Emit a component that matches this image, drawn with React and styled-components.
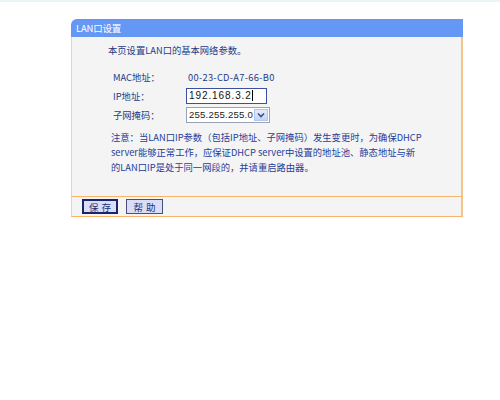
import React from "react";
import styled, { createGlobalStyle } from "styled-components";

const Global = createGlobalStyle`
  html, body { margin: 0; padding: 0; background: #ffffff; }
  body {
    font-family: "Noto Sans CJK SC", "Noto Sans", sans-serif;
    border-top: 2px solid #e6f6f6;
  }
`;

const Page = styled.div`
  padding: 17px 0 0 71px;
`;

const Panel = styled.div`
  width: 392px;
`;

const Header = styled.div`
  height: 18px;
  display: flex;
  align-items: center;
  padding-left: 5px;
  background: #6597f4;
  border-top-left-radius: 6px;
  color: #ffffff;
  font-size: 9.5px;
  letter-spacing: -0.2px;
`;

const Body = styled.div`
  background: #f4f4f4;
  border-left: 1px solid #f2d2a6;
  border-right: 2px solid #f5c489;
  padding: 6px 0 21px 36px;
  color: #243c84;
  font-size: 9.3px;
`;

const Intro = styled.div`
  line-height: 15px;
`;

const Fields = styled.div`
  margin-top: 9px;
  padding-left: 5px;
  display: grid;
  grid-template-columns: 73px auto;
  grid-auto-rows: 19px;
  align-items: center;
`;

const Label = styled.div``;

const Value = styled.div`
  padding-left: 2px;
  letter-spacing: 0.3px;
`;

const TextInput = styled.div`
  width: 77px;
  height: 14px;
  border: 1px solid #3c4fa0;
  background: #ffffff;
  display: flex;
  align-items: center;
  padding-left: 2px;
  font-family: "Liberation Sans", Arial, sans-serif;
  font-size: 10px;
  letter-spacing: 0.9px;
  color: #111;
`;

const Caret = styled.span`
  display: inline-block;
  width: 1px;
  height: 11px;
  background: #000;
`;

const SelectBox = styled.div`
  width: 82px;
  height: 14px;
  border: 1px solid #9aa3b5;
  background: #ffffff;
  display: flex;
  align-items: stretch;
  font-family: "Liberation Sans", Arial, sans-serif;
  font-size: 9.6px;
  letter-spacing: 0.2px;
  color: #222;
`;

const SelectText = styled.div`
  flex: 1;
  display: flex;
  align-items: center;
  padding-left: 2px;
`;

const ArrowButton = styled.div`
  width: 13px;
  background: linear-gradient(#e4ecfb, #c4d4f2);
  border: 1px solid #b6c6e6;
  margin: 1px;
  display: flex;
  align-items: center;
  justify-content: center;
`;

const Note = styled.div`
  margin-top: 6px;
  padding-left: 3px;
  line-height: 15px;
  white-space: nowrap;
  color: #1f3d9a;
`;

const Footer = styled.div`
  height: 19px;
  border-top: 1px solid #f7b46a;
  border-bottom: 1px solid #f7b46a;
  border-left: 1px solid #f2d2a6;
  border-right: 2px solid #f5c489;
  background: #f4f4f4;
  display: flex;
  align-items: center;
  gap: 8px;
  padding-left: 10px;
`;

const Button = styled.div`
  width: ${(p) => (p.$focused ? "29px" : "32px")};
  height: ${(p) => (p.$focused ? "11px" : "13px")};
  border: ${(p) => (p.$focused ? "2px solid #1a2470" : "1px solid #4a4f78")};
  background: #d9def6;
  color: #1c2f7c;
  font-size: 9.5px;
  display: flex;
  align-items: center;
  justify-content: center;
  letter-spacing: 3px;
  padding-left: 3px;
`;

export default function App() {
  return (
    <>
      <Global />
      <Page>
        <Panel>
          <Header>LAN口设置</Header>
          <Body>
            <Intro>本页设置LAN口的基本网络参数。</Intro>
            <Fields>
              <Label>MAC地址：</Label>
              <Value>00-23-CD-A7-66-B0</Value>
              <Label>IP地址：</Label>
              <TextInput>
                192.168.3.2
                <Caret />
              </TextInput>
              <Label>子网掩码：</Label>
              <SelectBox>
                <SelectText>255.255.255.0</SelectText>
                <ArrowButton>
                  <svg width="8" height="6" viewBox="0 0 8 6">
                    <path d="M1 1.5 L4 4.5 L7 1.5" fill="none" stroke="#3a4f8a" strokeWidth="1.6" />
                  </svg>
                </ArrowButton>
              </SelectBox>
            </Fields>
            <Note>
              注意：当LAN口IP参数（包括IP地址、子网掩码）发生变更时，为确保DHCP
              <br />
              server能够正常工作，应保证DHCP server中设置的地址池、静态地址与新
              <br />
              的LAN口IP是处于同一网段的，并请重启路由器。
            </Note>
          </Body>
          <Footer>
            <Button $focused>保存</Button>
            <Button>帮助</Button>
          </Footer>
        </Panel>
      </Page>
    </>
  );
}
